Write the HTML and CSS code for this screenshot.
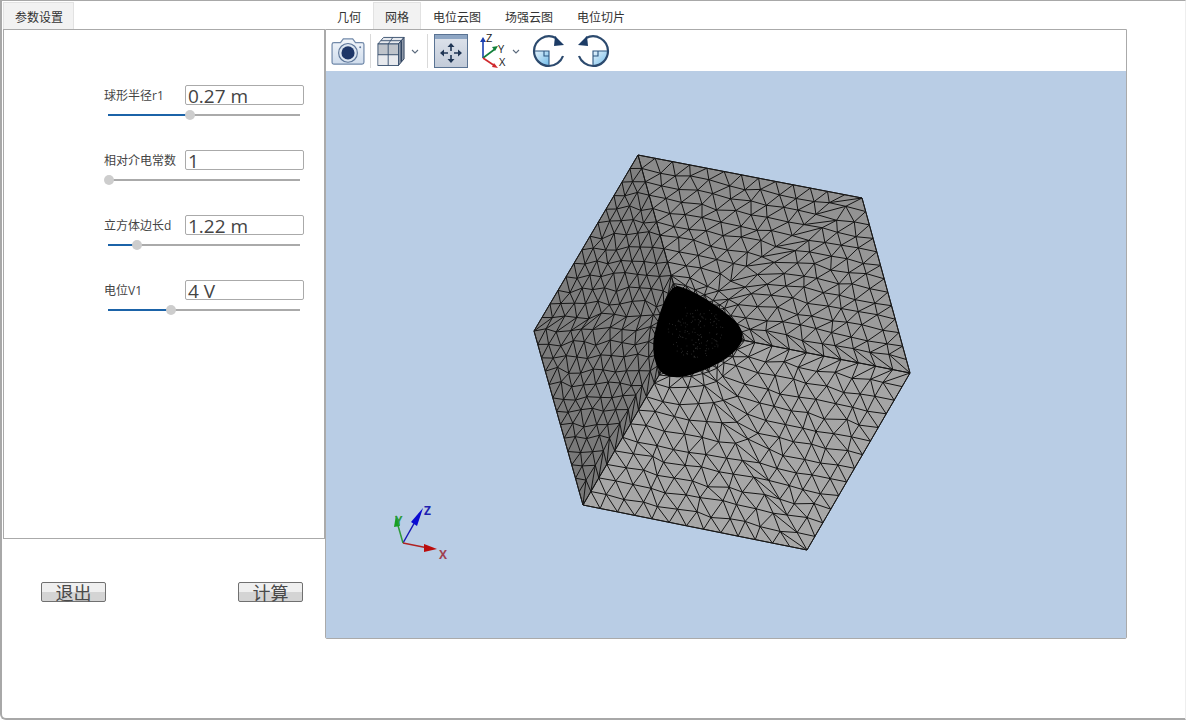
FILE: index.html
```html
<!DOCTYPE html>
<html lang="zh">
<head>
<meta charset="utf-8">
<title>参数设置</title>
<link rel="stylesheet" href="styles.css">
</head>
<body>
<div class="window">
  <aside class="side">
    <nav class="tabs"><span class="tab active side-tab">参数设置</span></nav>
    <section class="panel">
      <div class="param">
        <div class="param-row"><label class="param-label">球形半径r1</label><div class="field">0.27 m</div></div>
        <div class="slider"><div class="fill" style="width:82px"></div><div class="thumb" style="left:77px"></div></div>
      </div>
      <div class="param">
        <div class="param-row"><label class="param-label">相对介电常数</label><div class="field">1</div></div>
        <div class="slider"><div class="fill" style="width:0"></div><div class="thumb" style="left:-4px"></div></div>
      </div>
      <div class="param">
        <div class="param-row"><label class="param-label">立方体边长d</label><div class="field">1.22 m</div></div>
        <div class="slider"><div class="fill" style="width:29px"></div><div class="thumb" style="left:24px"></div></div>
      </div>
      <div class="param">
        <div class="param-row"><label class="param-label">电位V1</label><div class="field">4 V</div></div>
        <div class="slider"><div class="fill" style="width:63px"></div><div class="thumb" style="left:58px"></div></div>
      </div>
    </section>
    <div class="actions">
      <button class="btn">退出</button>
      <button class="btn">计算</button>
    </div>
  </aside>
  <main class="main">
    <nav class="tabs">
      <span class="tab">几何</span>
      <span class="tab active">网格</span>
      <span class="tab">电位云图</span>
      <span class="tab">场强云图</span>
      <span class="tab">电位切片</span>
    </nav>
    <section class="viewer">
      <div class="toolbar">
        <svg class="ic ic-camera" viewBox="0 0 36 32">
          <defs>
            <linearGradient id="camBody" x1="0" y1="0" x2="0" y2="1"><stop offset="0" stop-color="#f2f6fb"/><stop offset="1" stop-color="#cfdcec"/></linearGradient>
          </defs>
          <path d="M3 7h7l3-4h10l3 4h7a2 2 0 0 1 2 2v19a2 2 0 0 1-2 2H3a2 2 0 0 1-2-2V9a2 2 0 0 1 2-2z" fill="url(#camBody)" stroke="#7189a9" stroke-width="1.3"/>
          <circle cx="18" cy="18" r="10" fill="#dbe5f1" stroke="#5d7699" stroke-width="1.2"/>
          <circle cx="18" cy="18" r="7" fill="#1d3668"/>
          <circle cx="31" cy="12" r="1" fill="#5d7699"/>
        </svg>
        <span class="sep"></span>
        <svg class="ic ic-cube" viewBox="0 0 30 34">
          <path d="M1 10 7 3h22L23 10z" fill="#e6e9ee" stroke="#39516f"/>
          <path d="M23 10 29 3v23l-6 7z" fill="#8f99a8" stroke="#2d425e"/>
          <path d="M26 7v22" stroke="#2d425e" stroke-width="1.500"/>
          <rect x="1" y="10" width="22" height="23" fill="#bfc4cb" stroke="#39516f"/>
          <rect x="1.500" y="22" width="21" height="10.500" fill="#e8eaee"/>
          <path d="M12 10v23M1 21.500h22M4 6.500h22M17 3l-5 7" fill="none" stroke="#39516f"/>
        </svg>
        <svg class="ic ic-chev" viewBox="0 0 8 5"><path d="M1 1l3 3 3-3" fill="none" stroke="#5c6b7d" stroke-width="1.100"/></svg>
        <span class="sep sep-b"></span>
        <svg class="ic ic-fit" viewBox="0 0 34 34">
          <defs>
            <linearGradient id="fitBody" x1="0" y1="0" x2="0" y2="1"><stop offset="0" stop-color="#dfe4ec"/><stop offset="1" stop-color="#c2cbd9"/></linearGradient>
          </defs>
          <rect x=".5" y=".5" width="33" height="33" fill="url(#fitBody)" stroke="#5a7393"/>
          <rect x="1" y="1" width="32" height="4" fill="#8ea6c4"/>
          <path d="M17 12v5M17 21v5M9 19h5M20 19h5" stroke="#1f3554" stroke-width="1.600"/>
          <path d="M17 9l-3.500 4h7zM17 29l-3.500-4h7zM6 19l4-3.500v7zM28 19l-4-3.500v7z" fill="#1f3554"/>
        </svg>
        <svg class="ic ic-axes" viewBox="0 -2 30 40">
          <path d="M4 25V8" stroke="#1a3fb0" stroke-width="1.600"/>
          <path d="M4 4l-3 5h6z" fill="#1a3fb0"/>
          <path d="M4 25l12-9" stroke="#12803a" stroke-width="1.600"/>
          <path d="M19 13l-6 1 3 4z" fill="#12803a"/>
          <path d="M4 25l12 8" stroke="#d0282c" stroke-width="1.600"/>
          <path d="M19 35l-6-1 2-4z" fill="#d0282c"/>
          <text class="axis-t" x="7" y="9">Z</text>
          <text class="axis-t" x="19" y="20">Y</text>
          <text class="axis-t" x="20" y="33">X</text>
        </svg>
        <svg class="ic ic-chev ic-chev2" viewBox="0 0 8 5"><path d="M1 1l3 3 3-3" fill="none" stroke="#5c6b7d" stroke-width="1.100"/></svg>
        <svg class="ic ic-rot" viewBox="0 0 34 34">
          <defs>
            <linearGradient id="rotFill" x1="0" y1="0" x2="1" y2="1"><stop offset="0" stop-color="#e6f3fc"/><stop offset="1" stop-color="#6fbbe8"/></linearGradient>
          </defs>
          <path d="M2 17h15v15A15 15 0 0 1 2 17z" fill="url(#rotFill)"/>
          <path d="M2 17h15v15M12 17v5h5" fill="none" stroke="#2d5680" stroke-width="1.100"/>
          <path d="M24 4A15 15 0 0 0 2 17 15 15 0 0 0 17 32 15 15 0 0 0 31 22" fill="none" stroke="#2c4a6e" stroke-width="2.200"/>
          <path d="M23 2l9 9-10 1z" fill="#1c3c66"/>
        </svg>
        <svg class="ic ic-rot2" viewBox="0 0 34 34">
          <path d="M32 17H17v15A15 15 0 0 0 32 17z" fill="url(#rotFill)"/>
          <path d="M32 17H17v15M22 17v5h-5" fill="none" stroke="#2d5680" stroke-width="1.100"/>
          <path d="M10 4A15 15 0 0 1 32 17 15 15 0 0 1 17 32 15 15 0 0 1 3 22" fill="none" stroke="#2c4a6e" stroke-width="2.200"/>
          <path d="M11 2l-9 9 10 1z" fill="#1c3c66"/>
        </svg>
      </div>
      <div class="view">
        <svg class="scene" viewBox="326 71 800 567">
          <defs>
            <linearGradient id="faceL" gradientUnits="userSpaceOnUse" x1="600" y1="160" x2="600" y2="510"><stop offset="0" stop-color="#808080"/><stop offset="1" stop-color="#787878"/></linearGradient>
            <linearGradient id="faceT" gradientUnits="userSpaceOnUse" x1="700" y1="170" x2="800" y2="370"><stop offset="0" stop-color="#8b8b8b"/><stop offset="1" stop-color="#9c9c9c"/></linearGradient>
            <linearGradient id="faceB" gradientUnits="userSpaceOnUse" x1="700" y1="360" x2="700" y2="550"><stop offset="0" stop-color="#a4a4a4"/><stop offset="1" stop-color="#a8a8a8"/></linearGradient>
          </defs>
          <g id="mesh"></g>
          <g class="triad">
            <path d="M403 543 420 513" stroke="#1616b4" stroke-width="1.500"/>
            <path d="M423 508 411 522 417 526z" fill="#0a0ad2"/>
            <path d="M403 543 397 522" stroke="#2f9a3a" stroke-width="1.500"/>
            <path d="M396 515 394 527 400 526z" fill="#16a020"/>
            <path d="M403 543 428 548" stroke="#b02222" stroke-width="1.500"/>
            <path d="M437 549 424 544 424 552z" fill="#bb0c0c"/>
            <text class="tri-z" x="424" y="515">Z</text>
            <text class="tri-y" x="395" y="525">Y</text>
            <text class="tri-x" x="439" y="559">X</text>
          </g>
        </svg>
      </div>
    </section>
  </main>
</div>
<script src="script.js"></script>
</body>
</html>
```
FILE: styles.css
```css
* { box-sizing: border-box; }
html, body { margin: 0; padding: 0; background: #fff; }
body {
  font-family: "Open Sans", "Noto Sans CJK SC", sans-serif;
  color: #444;
  overflow: hidden;
}
.window {
  width: 1186px;
  height: 720px;
  display: flex;
  padding-top: 1px;
  background: #fff;
  border-top: 1px solid #a8a8a8;
  border-left: 2px solid #a8a8a8;
  border-bottom: 2px solid #a8a8a8;
  border-right: 1px solid #eee;
  border-bottom-left-radius: 6px;
}
.side { width: 323px; padding-left: 1px; flex: none; }
.main { width: 802px; flex: none; }
.tabs { display: flex; height: 27px; }
.tab {
  width: 72px;
  height: 27px;
  font: 12px/28px "Noto Sans CJK SC", sans-serif;
  color: #333;
  text-align: center;
  border: 1px solid transparent;
  border-bottom: 0;
}
.tab:nth-child(1), .tab:nth-child(2) { width: 48px; }
.tab.side-tab { width: 71px; padding-left: 1px; }
.tab.active { background: #f2f2f2; border-color: #e2e2e2; }
.panel {
  width: 322px;
  height: 510px;
  padding: 55px 0 0 100px;
  border: 1px solid #aaa;
  background: #fff;
}
.param { width: 200px; margin-bottom: 30px; }
.param-row { display: flex; align-items: center; height: 20px; }
.param-label {
  width: 81px;
  flex: none;
  padding-top: 2px;
  font: 12px/20px "Open Sans", "Noto Sans CJK SC", sans-serif;
  color: #444;
  white-space: nowrap;
}
.field {
  width: 119px;
  height: 20px;
  padding-left: 2px;
  border: 1px solid #aaa;
  border-radius: 2px;
  font-size: 19px;
  line-height: 20px;
  color: #444;
}
.slider {
  position: relative;
  width: 192px;
  height: 10px;
  margin: 5px 0 0 4px;
}
.slider::before {
  content: "";
  position: absolute;
  left: 0; right: 0; top: 4px;
  height: 2px;
  background: #aaa;
}
.fill {
  position: absolute;
  left: 0; top: 4px;
  height: 2px;
  background: #1b63a8;
}
.thumb {
  position: absolute;
  top: 0;
  width: 10px;
  height: 10px;
  border-radius: 50%;
  background: #cdcdcd;
}
.actions {
  display: flex;
  justify-content: space-between;
  width: 322px;
  padding: 0 22px 0 38px;
  margin-top: 43px;
}
.btn {
  width: 65px;
  height: 20px;
  padding: 0;
  font: 18px/18px "Noto Sans CJK SC", sans-serif;
  color: #4a4a4a;
  border: 1px solid #707070;
  border-radius: 2px;
  background: linear-gradient(#efefef 0, #efefef 50%, #d4d4d4 50%, #d4d4d4 100%);
}
.viewer {
  width: 802px;
  height: 610px;
  display: flex;
  flex-direction: column;
  border: 1px solid #aaa;
  border-radius: 0 0 2px 2px;
  background: #fff;
}
.toolbar {
  display: flex;
  align-items: center;
  height: 41px;
  flex: none;
  padding-left: 5px;
  background: #fff;
}
.ic { display: block; flex: none; }
.ic-camera { width: 34px; height: 30px; }
.sep { width: 1px; height: 34px; background: #d9d9d9; margin: 0 6px 0 5px; flex: none; }
.sep-b { margin: 0 6px 0 8px; }
.ic-cube { width: 28px; height: 33px; }
.ic-chev { width: 8px; height: 5px; margin: 2px 0 0 6px; }
.ic-fit { width: 34px; height: 34px; }
.ic-axes { width: 30px; height: 40px; margin-left: 11px; }
.ic-chev2 { margin-left: 3px; }
.ic-rot { width: 34px; height: 34px; margin-left: 12px; }
.ic-rot2 { width: 34px; height: 34px; margin-left: 10px; }
.axis-t { font: 11px "Open Sans", sans-serif; fill: #222; }
.view { flex: 1; background: #b9cde5; min-height: 0; }
.scene { display: block; width: 800px; height: 567px; }
.triad text { font: 700 12px "Open Sans", sans-serif; }
.tri-z { fill: #1f1fb0; }
.tri-y { fill: #2e9a38; }
.tri-x { fill: #a04050; }
```
FILE: script.js
```js
(function () {
  var NS = "http://www.w3.org/2000/svg";
  var root = document.getElementById("mesh");
  var seed = 12345;
  function rnd() { seed = (seed * 1664525 + 1013904223) >>> 0; return seed / 4294967296; }

  var C = [686, 329], A = [638, 155], B = [862, 198], R = [910, 373],
      D = [807, 550], E = [583, 505], L = [534, 331];

  // Rings shared by the three faces: uniform far out, fine round the sphere.
  var K = 13, H = 1 / K, FIRST = 4;
  var rings = [];
  for (var i = K; i >= FIRST; i--) rings.unshift({ r: i * H, h: H, cells: i });
  var r = FIRST * H, step = H * 0.6;
  while (r - step > 0.2) {
    r -= step;
    rings.unshift({ r: r, h: step, cells: Math.max(3, Math.round(r * 0.95 / step)) });
    step *= 0.6;
  }

  function add(tag, attrs) {
    var el = document.createElementNS(NS, tag);
    for (var k in attrs) el.setAttribute(k, attrs[k]);
    root.appendChild(el);
    return el;
  }
  function ringPoints(ring) {
    var rr = ring.r, h = ring.h, n = ring.cells * 2;
    var outer = rr >= 0.6;
    var p = 1.7 + 14 * Math.pow(rr / 0.6, 4);
    var pts = [];
    for (var i = 0; i <= n; i++) {
      var u = i / n;
      var x = u <= 0.5 ? 1 : 2 - 2 * u;
      var y = u <= 0.5 ? 2 * u : 1;
      var s = rr * x, t = rr * y;
      if (!outer) {
        var norm = Math.pow(Math.pow(x, p) + Math.pow(y, p), 1 / p);
        s = rr * x / norm; t = rr * y / norm;
      }
      if (i > 0 && i < n && rr < 0.999) {
        s += (rnd() - 0.5) * h * 0.3;
        t += (rnd() - 0.5) * h * 0.3;
      }
      pts.push([Math.min(1, Math.max(0, s)), Math.min(1, Math.max(0, t))]);
    }
    return pts;
  }
  var coarse = [], fine = [];
  function face(P, O, Q, fill) {
    function map(q) {
      var s = q[0], t = q[1];
      return [
        C[0] * (1 - s) * (1 - t) + P[0] * s * (1 - t) + Q[0] * (1 - s) * t + O[0] * s * t,
        C[1] * (1 - s) * (1 - t) + P[1] * s * (1 - t) + Q[1] * (1 - s) * t + O[1] * s * t
      ];
    }
    function seg(a, b, h) {
      var m = map(a), q = map(b);
      (h < 0.035 ? fine : coarse).push("M" + m[0].toFixed(1) + " " + m[1].toFixed(1) + "L" + q[0].toFixed(1) + " " + q[1].toFixed(1));
    }
    add("polygon", { points: [C, P, O, Q].join(" "), fill: fill });
    var prev = null;
    rings.forEach(function (ring) {
      var pts = ringPoints(ring);
      for (var i = 0; i < pts.length - 1; i++) seg(pts[i], pts[i + 1], ring.h);
      if (prev) {
        var a = 0, b = 0, na = prev.length - 1, nb = pts.length - 1;
        seg(prev[0], pts[0], ring.h);
        while (a < na || b < nb) {
          if (b >= nb || (a < na && (a + 1) / na < (b + 1) / nb)) a++; else b++;
          seg(prev[a], pts[b], ring.h);
        }
      }
      prev = pts;
    });
  }
  face(A, L, E, "url(#faceL)");
  face(A, B, R, "url(#faceT)");
  face(E, D, R, "url(#faceB)");

  add("path", { d: fine.join(""), fill: "none", stroke: "#000", "stroke-width": "0.6" });
  add("path", { d: coarse.join(""), fill: "none", stroke: "#141414", "stroke-width": "1" });
  add("polygon", { points: [A, B, R, D, E, L].join(" "), fill: "none", stroke: "#1a1a1a", "stroke-width": "1" });

  // The sphere: so finely meshed that it reads as a solid black shape.
  add("path", {
    d: "M677 286C690 288 716 304 732 318C741 326 745 335 741 343C733 358 710 369 690 375C677 379 664 378 658 368C652 356 652 340 656 328C660 312 667 288 677 286Z",
    fill: "#000"
  });
  var dots = [];
  for (var j = 0; j < 140; j++) {
    var a = rnd() * Math.PI * 2, d = Math.sqrt(rnd());
    var x = 695 + Math.cos(a) * d * 28, y = 332 + Math.sin(a) * d * 26;
    dots.push("M" + x.toFixed(1) + " " + y.toFixed(1) + "h.7");
  }
  add("path", { d: dots.join(""), fill: "none", stroke: "#555", "stroke-width": "0.6" });
})();
```
